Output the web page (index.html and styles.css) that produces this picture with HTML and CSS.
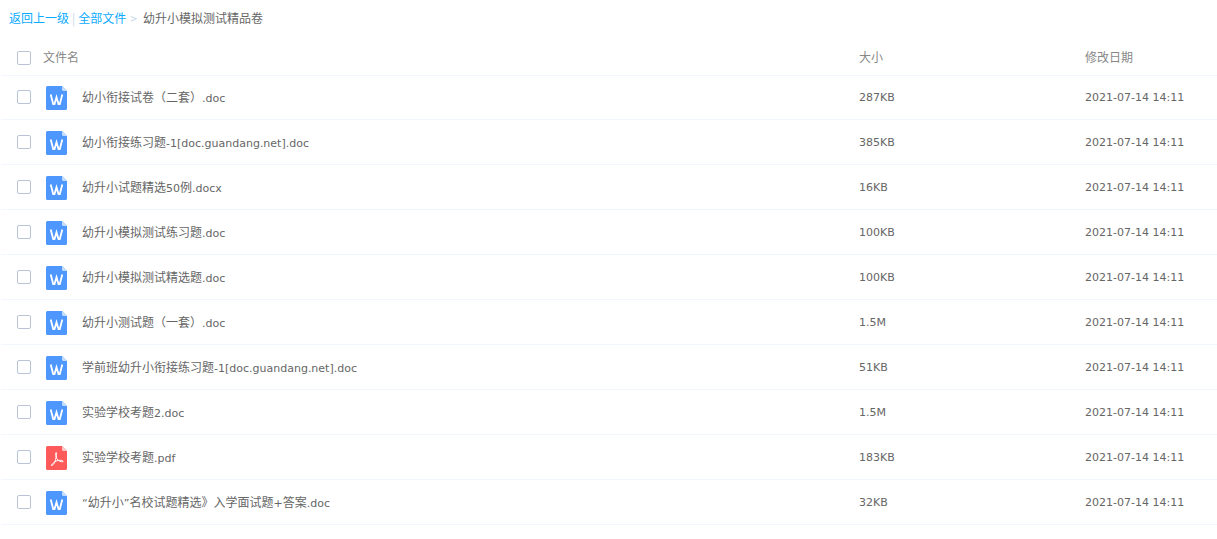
FILE: index.html
```html
<!DOCTYPE html>
<html lang="zh-CN">
<head>
    <meta charset="UTF-8">
    <title>幼升小模拟测试精品卷</title>
    <link rel="stylesheet" href="styles.css">
</head>
<body>

<svg class="sprites" width="0" height="0" aria-hidden="true">
    <symbol id="icon-word" viewBox="0 0 21 24">
        <path d="M1.5 0H16L21 5V22.5A1.5 1.5 0 0 1 19.5 24H1.5A1.5 1.5 0 0 1 0 22.5V1.5A1.5 1.5 0 0 1 1.5 0Z" fill="#4d97ff"/>
        <path d="M16 0L21 5H17.5A1.5 1.5 0 0 1 16 3.5Z" fill="#c4dcff"/>
        <path d="M4.7 8.4L7.2 18H8.5L10.5 11.2L12.5 18H13.8L16.3 8.4" fill="none" stroke="#fff" stroke-width="1.8"/>
    </symbol>
    <symbol id="icon-pdf" viewBox="0 0 21 24">
        <path d="M1.5 0H16L21 5V22.5A1.5 1.5 0 0 1 19.5 24H1.5A1.5 1.5 0 0 1 0 22.5V1.5A1.5 1.5 0 0 1 1.5 0Z" fill="#ff5a5a"/>
        <path d="M16 0L21 5H17.5A1.5 1.5 0 0 1 16 3.5Z" fill="#ffc8c8"/>
        <path d="M10.2 6.6C9.2 6.6 9.6 10.4 10.9 12.8C12.1 14.8 15.6 16.4 17 15.6C18 14.9 15.2 14 12.4 14.4C9.4 14.8 5.8 18 5.4 19.2C5.2 20 6.6 19.6 8 17.6C9.6 15.2 11.2 7.2 10.2 6.6Z" fill="none" stroke="#fff" stroke-width="1"/>
    </symbol>
</svg>

<div class="crumbs">
    <a href="#">返回上一级</a>
    <span class="sep">|</span>
    <a href="#">全部文件</a>
    <span class="arrow">&gt;</span>
    <span class="current">幼升小模拟测试精品卷</span>
</div>

<div class="file-list">
    <div class="row head">
        <span class="check"></span>
        <span class="name">文件名</span>
        <span class="size">大小</span>
        <span class="date">修改日期</span>
    </div>
    <div class="row">
        <span class="check"></span>
        <svg class="file-icon"><use href="#icon-word"/></svg>
        <span class="name">幼小衔接试卷（二套）<span class="en">.doc</span></span>
        <span class="size en">287KB</span>
        <span class="date en">2021-07-14 14:11</span>
    </div>
    <div class="row">
        <span class="check"></span>
        <svg class="file-icon"><use href="#icon-word"/></svg>
        <span class="name">幼小衔接练习题<span class="en">-1[doc.guandang.net].doc</span></span>
        <span class="size en">385KB</span>
        <span class="date en">2021-07-14 14:11</span>
    </div>
    <div class="row">
        <span class="check"></span>
        <svg class="file-icon"><use href="#icon-word"/></svg>
        <span class="name">幼升小试题精选<span class="en">50</span>例<span class="en">.docx</span></span>
        <span class="size en">16KB</span>
        <span class="date en">2021-07-14 14:11</span>
    </div>
    <div class="row">
        <span class="check"></span>
        <svg class="file-icon"><use href="#icon-word"/></svg>
        <span class="name">幼升小模拟测试练习题<span class="en">.doc</span></span>
        <span class="size en">100KB</span>
        <span class="date en">2021-07-14 14:11</span>
    </div>
    <div class="row">
        <span class="check"></span>
        <svg class="file-icon"><use href="#icon-word"/></svg>
        <span class="name">幼升小模拟测试精选题<span class="en">.doc</span></span>
        <span class="size en">100KB</span>
        <span class="date en">2021-07-14 14:11</span>
    </div>
    <div class="row">
        <span class="check"></span>
        <svg class="file-icon"><use href="#icon-word"/></svg>
        <span class="name">幼升小测试题（一套）<span class="en">.doc</span></span>
        <span class="size en">1.5M</span>
        <span class="date en">2021-07-14 14:11</span>
    </div>
    <div class="row">
        <span class="check"></span>
        <svg class="file-icon"><use href="#icon-word"/></svg>
        <span class="name">学前班幼升小衔接练习题<span class="en">-1[doc.guandang.net].doc</span></span>
        <span class="size en">51KB</span>
        <span class="date en">2021-07-14 14:11</span>
    </div>
    <div class="row">
        <span class="check"></span>
        <svg class="file-icon"><use href="#icon-word"/></svg>
        <span class="name">实验学校考题<span class="en">2.doc</span></span>
        <span class="size en">1.5M</span>
        <span class="date en">2021-07-14 14:11</span>
    </div>
    <div class="row">
        <span class="check"></span>
        <svg class="file-icon"><use href="#icon-pdf"/></svg>
        <span class="name">实验学校考题<span class="en">.pdf</span></span>
        <span class="size en">183KB</span>
        <span class="date en">2021-07-14 14:11</span>
    </div>
    <div class="row">
        <span class="check"></span>
        <svg class="file-icon"><use href="#icon-word"/></svg>
        <span class="name"><span class="en">“</span>幼升小<span class="en">”</span>名校试题精选》入学面试题<span class="en">+</span>答案<span class="en">.doc</span></span>
        <span class="size en">32KB</span>
        <span class="date en">2021-07-14 14:11</span>
    </div>
</div>

</body>
</html>
```
FILE: styles.css
```css
body {
    font-family: "Noto Sans CJK SC", "Noto Sans", sans-serif;
    font-size: 12px;
    margin: 0;
    padding: 0;
    background-color: #fff;
    color: #666;
}

.sprites {
    display: block;
    height: 0;
}

.en {
    font-family: "DejaVu Sans", sans-serif;
    font-size: 11px;
}

.crumbs {
    display: flex;
    height: 38px;
    padding-left: 9px;
    line-height: 35px;
    color: #666;
}

.crumbs a {
    color: #09aaff;
    text-decoration: none;
}

.crumbs .sep {
    color: #c5d9e8;
    margin: 0 3px;
}

.crumbs .arrow {
    color: #c5d9e8;
    margin: 0 6px 0 4px;
}

.file-list {
    margin-left: 1px;
}

.row {
    display: flex;
    align-items: center;
    height: 44px;
    padding-left: 16px;
    border-bottom: 1px solid #f2f6fd;
}

.row.head {
    height: 37px;
    color: #888;
}

.head + .row {
    height: 43px;
}

.check {
    flex: none;
    box-sizing: border-box;
    width: 14px;
    height: 14px;
    margin-top: -1px;
    border: 1px solid #b9c4d6;
    border-radius: 2px;
    background-color: #fff;
}

.head .check {
    margin-top: 3px;
}

.file-icon {
    flex: none;
    width: 21px;
    height: 24px;
    margin: 1px 0 0 15px;
}

.name {
    flex: none;
    width: 777px;
    margin: 0 0 2px 15px;
}

.head .name {
    width: 816px;
    margin: 0 0 0 12px;
}

.size {
    flex: none;
    width: 226px;
}

.date {
    flex: none;
}
```
